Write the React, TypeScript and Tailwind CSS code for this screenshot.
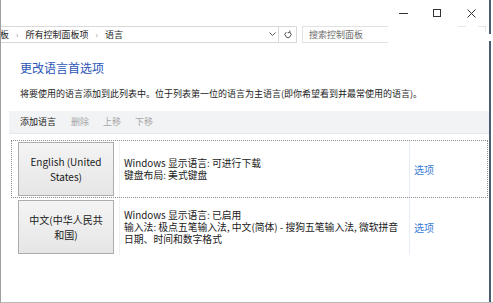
import React from "react";

const font = "font-['Noto_Sans_CJK_SC','Noto_Sans',sans-serif]";

function Row({
  selected,
  name,
  lines,
}: {
  selected?: boolean;
  name: string[];
  lines: string[];
}) {
  return (
    <div
      className={`flex h-[58px] ${
        selected ? "border border-dotted border-[#8c8c8c]" : "border border-transparent"
      }`}
    >
      <div className="w-[102px] shrink-0 pl-[6px] pt-px">
        <div className="w-[96px] h-[54px] border border-[#acacac] bg-gradient-to-b from-[#f4f4f4] to-[#e6e6e6] flex flex-col items-center justify-center text-[10px] leading-[15px] text-[#1a1a1a]">
          {name.map((n) => (
            <div key={n}>{n}</div>
          ))}
        </div>
      </div>
      <div className="w-[6px] shrink-0 border-r border-[#eef2f7]" />
      <div className="w-[290px] shrink-0 border-r border-[#e8eef8] pl-[4px] flex flex-col justify-center text-[9.8px] text-[#1a1a1a] whitespace-nowrap">
        {lines.map((l) => (
          <div key={l} className="h-[12px] leading-[12px]">
            {l}
          </div>
        ))}
      </div>
      <div className="flex-1 pl-[4px] flex items-center text-[10px] text-[#3a7bd5]">选项</div>
    </div>
  );
}

export default function App() {
  return (
    <div
      className={`${font} w-[493px] h-[303px] bg-white overflow-hidden relative border-l border-[#a0a0a0] border-b border-b-[#b8b8b8]`}
    >
      {/* right window edge */}
      <div className="absolute right-[2px] top-0 bottom-0 w-[2px] bg-[#4b5b72]" />
      <div className="absolute right-[2px] top-[34px] h-[7px] w-[2px] bg-white" />

      {/* title bar */}
      <div className="h-[26px] flex justify-end pr-[5px]">
        <div className="w-[34px] flex items-center justify-center">
          <div className="w-[9px] h-px bg-[#333]" />
        </div>
        <div className="w-[34px] flex items-center justify-center">
          <div className="w-[8px] h-[8px] border border-[#333]" />
        </div>
        <div className="w-[34px] flex items-center justify-center">
          <svg width="9" height="9" viewBox="0 0 9 9">
            <path d="M0.5 0.5 L8.5 8.5 M8.5 0.5 L0.5 8.5" stroke="#333" strokeWidth="1" />
          </svg>
        </div>
      </div>

      {/* address bar */}
      <div className="flex h-[17px] text-[9px] text-[#1a1a1a]">
        <div className="w-[277px] border-y border-[#d9d9d9] flex items-center">
          <span className="ml-[-1px]">板</span>
          <span className="mx-[7px] text-[#888] text-[8px]">›</span>
          <span>所有控制面板项</span>
          <span className="mx-[7px] text-[#888] text-[8px]">›</span>
          <span>语言</span>
          <span className="ml-auto mr-[2px]">
            <svg width="7" height="5" viewBox="0 0 7 5">
              <path d="M0.5 0.5 L3.5 3.5 L6.5 0.5" stroke="#555" fill="none" strokeWidth="1" />
            </svg>
          </span>
        </div>
        <div className="w-[19px] border-y border-r border-l border-[#d9d9d9] flex items-center justify-center">
          <svg width="8" height="9" viewBox="0 0 8 9">
            <path d="M5.8 2.2 A3 3 0 1 1 2.2 2.2" stroke="#555" fill="none" strokeWidth="1" />
            <path d="M5.8 0.5 L5.8 2.6 L3.7 2.6" stroke="#555" fill="none" strokeWidth="1" />
          </svg>
        </div>
        <div className="w-[5px]" />
        <div className="w-[86px] border-y border-l border-[#e2e2e2] flex items-center pl-[6px] text-[#6d6d6d]">
          搜索控制面板
        </div>
        <div className="flex-1 relative">
          <div className="absolute left-[70px] top-0 w-[8px] h-px bg-[#e6e6e6]" />
          <div className="absolute left-[90px] top-0 w-[8px] h-px bg-[#e6e6e6]" />
          <div className="absolute left-[97px] top-0 w-px h-[6px] bg-[#e6e6e6]" />
        </div>
      </div>

      {/* content */}
      <div className="pl-[19px] mt-[17px] text-[12px] leading-[16px] text-[#2a55b8]">更改语言首选项</div>
      <div className="pl-[19px] mt-[12px] text-[9px] leading-[12px] text-[#1a1a1a] whitespace-nowrap">
        将要使用的语言添加到此列表中。位于列表第一位的语言为主语言(即你希望看到并最常使用的语言)。
      </div>

      {/* toolbar */}
      <div className="ml-[8px] mr-[3px] mt-[11px] h-[23px] bg-[#f2f3f5] border-b border-[#e6e7ea] flex items-center text-[9px] pl-[11px]">
        <span className="text-[#1a1a1a]">添加语言</span>
        <span className="ml-[15px] text-[#a6a6a6]">删除</span>
        <span className="ml-[14px] text-[#a6a6a6]">上移</span>
        <span className="ml-[14px] text-[#a6a6a6]">下移</span>
      </div>

      {/* list */}
      <div className="ml-[10px] mr-[5px] mt-[6px]">
        <Row
          selected
          name={["English (United", "States)"]}
          lines={["Windows 显示语言: 可进行下载", "键盘布局: 美式键盘"]}
        />
        <Row
          name={["中文(中华人民共", "和国)"]}
          lines={[
            "Windows 显示语言: 已启用",
            "输入法: 极点五笔输入法, 中文(简体) - 搜狗五笔输入法, 微软拼音",
            "日期、时间和数字格式",
          ]}
        />
      </div>
    </div>
  );
}
